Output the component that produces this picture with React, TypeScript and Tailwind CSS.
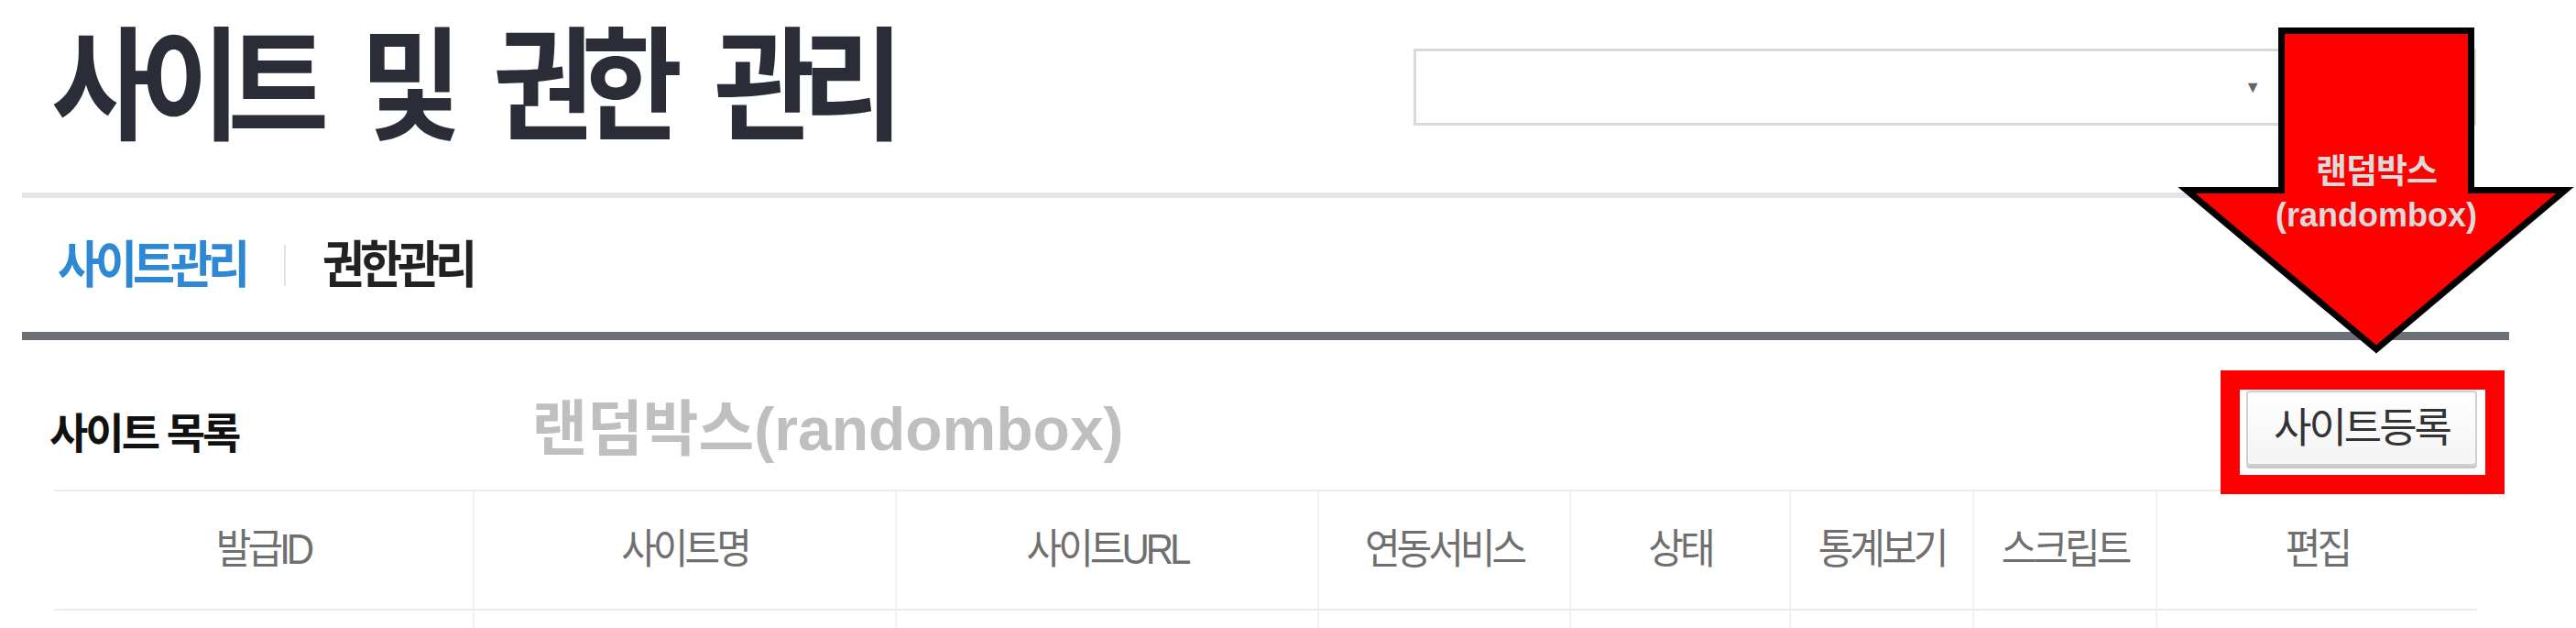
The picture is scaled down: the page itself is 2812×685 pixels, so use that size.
import { ReactNode } from "react";

const columns = [
  { label: "발급ID", width: "w-[457px]" },
  { label: "사이트명", width: "w-[461px]" },
  { label: "사이트URL", width: "w-[461px]" },
  { label: "연동서비스", width: "w-[275px]" },
  { label: "상태", width: "w-[240px]" },
  { label: "통계보기", width: "w-[200px]" },
  { label: "스크립트", width: "w-[200px]" },
  { label: "편집", width: "w-[351px]" },
];

const Cell = ({ children, width, first }: { children?: ReactNode; width: string; first: boolean }) => (
  <div
    className={`${width} flex h-full items-center justify-center ${first ? "" : "border-l-2 border-[#f0f0f0]"}`}
  >
    {children}
  </div>
);

const DownArrow = () => (
  <svg
    className="absolute left-[2370px] top-[24px]"
    width="446"
    height="370"
    viewBox="2370 24 446 370"
  >
    <polygon
      points="2490.5,33.5 2697.5,33.5 2697.5,207.5 2800,207.5 2594,381 2387,207.5 2490.5,207.5"
      fill="#ff0000"
      stroke="#000"
      strokeWidth="7"
      strokeLinejoin="miter"
    />
  </svg>
);

export default function App() {
  return (
    <div className="relative h-[685px] w-[2812px] overflow-hidden bg-white font-['Liberation_Sans','Noto_Sans_CJK_KR',sans-serif]">
      <div className="ml-[24px] flex w-[2715px] flex-col">
        {/* page title + site select */}
        <div className="flex h-[210px] items-start">
          <h1 className="ml-[32px] mt-[28px] origin-top scale-y-[1.12] text-[120px] font-bold leading-none tracking-[-14px] text-[#2a2d37] [word-spacing:29px]">
            사이트 및 권한 관리
          </h1>
          <div className="ml-auto mr-[36px] mt-[53px] flex h-[84px] w-[1160px] items-center justify-end border-[3px] border-[#d9d9d9] bg-white pr-[232px]">
            <span className="text-[18px] leading-none text-[#666]">▼</span>
          </div>
        </div>

        <div className="h-[6px] bg-[#e4e5e7]" />

        {/* tabs */}
        <div className="flex h-[146px] items-center pl-[39px]">
          <span className="scale-y-[1.1] text-[50px] font-bold leading-none tracking-[-5px] text-[#2f88d4]">사이트관리</span>
          <span className="ml-[42px] h-[45px] w-[2px] bg-[#e2e2e2]" />
          <span className="ml-[40px] scale-y-[1.1] text-[50px] font-bold leading-none tracking-[-5px] text-[#222]">권한관리</span>
        </div>

        <div className="h-[9px] bg-[#6b7079]" />

        {/* section header */}
        <div className="flex h-[163px] items-start">
          <h2 className="ml-[30px] mt-[79px] text-[46px] font-bold leading-none tracking-[-3px] text-[#111]">
            사이트 목록
          </h2>
          <span className="ml-[320px] mt-[64px] text-[66px] font-bold leading-none text-[#bfbfbf]">
            랜덤박스(randombox)
          </span>
          <button className="ml-auto mr-[35px] mt-[55px] flex h-[82px] w-[252px] items-center justify-center rounded-[4px] border-2 border-[#d0d0d0] bg-gradient-to-b from-white to-[#f4f4f4] text-[45px] leading-none tracking-[-3px] text-[#333] shadow-[0_3px_0_#c8c8c8]">
            사이트등록
          </button>
        </div>

        {/* table */}
        <div className="ml-[35px] w-[2645px]">
          <div className="flex h-[132px] border-y-2 border-[#ebebeb]">
            {columns.map((c, i) => (
              <Cell key={c.label} width={c.width} first={i === 0}>
                <span className="scale-y-[1.08] text-[42px] leading-none tracking-[-4px] text-[#6f6f6f]">{c.label}</span>
              </Cell>
            ))}
          </div>
          <div className="flex h-[80px]">
            {columns.map((c, i) => (
              <Cell key={c.label} width={c.width} first={i === 0} />
            ))}
          </div>
        </div>
      </div>

      {/* annotation overlays */}
      <DownArrow />
      <div className="absolute left-[2482px] top-[163px] flex w-[224px] flex-col items-center font-bold text-[#dedada]">
        <span className="text-[37px] leading-[50px] tracking-[-1px]">랜덤박스</span>
        <span className="text-[36px] leading-[44px]">(randombox)</span>
      </div>
      <div className="absolute left-[2424px] top-[404px] h-[135px] w-[310px] border-[21px] border-[#ff0000]" />
    </div>
  );
}
